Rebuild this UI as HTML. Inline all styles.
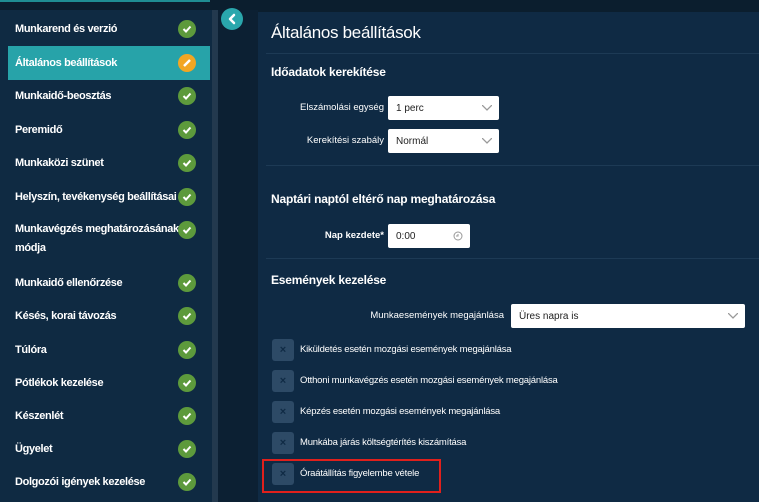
<!DOCTYPE html>
<html><head><meta charset="utf-8"><style>
*{margin:0;padding:0;box-sizing:border-box}
body{width:759px;height:502px;overflow:hidden;background:#0a1f31;font-family:"Liberation Sans",sans-serif;position:relative;color:#fff}
.abs{position:absolute}
#top{left:0;top:0;width:759px;height:12px;background:#0b1e2e}
#teal{left:0;top:0;width:210px;height:2px;background:#1f8d92}
#side{left:0;top:10px;width:212px;height:492px;background:#0f2a42}
#scroll{left:212px;top:10px;width:6px;height:492px;background:#23394e}
#gap{left:218px;top:10px;width:40px;height:492px;background:#0c2033}
#btn{left:221px;top:8px;width:22px;height:22px;border-radius:50%;background:#2aa7ad}
.it{position:absolute;left:8px;width:202px;font-size:11px;letter-spacing:-0.35px;font-weight:bold;padding-left:7px;display:flex;align-items:center;line-height:17px}
.it.act{background:#27a3a9}
.ck{position:absolute;left:170px;width:18px;height:18px;border-radius:50%;background:#5d9a3c}
.ck svg{position:absolute;left:4px;top:4px}
#main{left:258px;top:12px;width:501px;height:490px;background:#0f2a44}
.h1{left:271px;top:23px;font-size:17px;letter-spacing:-0.3px}
.h2{font-size:12px;font-weight:bold;left:271px;letter-spacing:-0.2px}
.ln{left:266px;width:493px;height:1px;background:#1d3a55}
.lab{font-size:9.5px;text-align:right;width:160px}
.sel{background:#fff;border-radius:2px;color:#222;font-size:10px;padding-left:8px;display:flex;align-items:center}
.sel svg{position:absolute;right:7px;top:9px}
.cb{left:272px;width:22px;height:22px;border-radius:3px;background:#2d4a66;color:#0f2a44;font-size:11px;text-align:center;line-height:22px;font-weight:bold}
.cl{left:300px;font-size:9.5px;letter-spacing:-0.2px}
</style></head><body>
<div id="top" class="abs"></div><div id="teal" class="abs"></div>
<div id="side" class="abs"></div><div id="scroll" class="abs"></div><div id="gap" class="abs"></div>
<div id="btn" class="abs"><svg width="22" height="22"><path d="M13 7 L9 11 L13 15" stroke="#fff" stroke-width="2.5" fill="none" stroke-linecap="round" stroke-linejoin="round"/></svg></div>

<div class="it" style="top:20px;height:18px">Munkarend és verzió<div class="ck"><svg width="10" height="10"><path d="M1.5 5 L4 7.5 L8.5 2.5" stroke="#fff" stroke-width="2" fill="none"/></svg></div></div>
<div class="it act" style="top:46px;height:34px">Általános beállítások<div class="ck" style="background:#f2a623;top:8px"><svg width="10" height="10"><path d="M2 8 L8 2" stroke="#fff" stroke-width="2.5"/></svg></div></div>
<div class="it" style="top:87px;height:18px">Munkaidő-beosztás<div class="ck"><svg width="10" height="10"><path d="M1.5 5 L4 7.5 L8.5 2.5" stroke="#fff" stroke-width="2" fill="none"/></svg></div></div>
<div class="it" style="top:121px;height:18px">Peremidő<div class="ck"><svg width="10" height="10"><path d="M1.5 5 L4 7.5 L8.5 2.5" stroke="#fff" stroke-width="2" fill="none"/></svg></div></div>
<div class="it" style="top:154px;height:18px">Munkaközi szünet<div class="ck"><svg width="10" height="10"><path d="M1.5 5 L4 7.5 L8.5 2.5" stroke="#fff" stroke-width="2" fill="none"/></svg></div></div>
<div class="it" style="top:188px;height:18px">Helyszín, tevékenység beállításai<div class="ck"><svg width="10" height="10"><path d="M1.5 5 L4 7.5 L8.5 2.5" stroke="#fff" stroke-width="2" fill="none"/></svg></div></div>
<div class="it" style="top:221px;height:36px;line-height:19px">Munkavégzés meghatározásának<br>módja<div class="ck" style="top:0"><svg width="10" height="10"><path d="M1.5 5 L4 7.5 L8.5 2.5" stroke="#fff" stroke-width="2" fill="none"/></svg></div></div>
<div class="it" style="top:274px;height:18px">Munkaidő ellenőrzése<div class="ck"><svg width="10" height="10"><path d="M1.5 5 L4 7.5 L8.5 2.5" stroke="#fff" stroke-width="2" fill="none"/></svg></div></div>
<div class="it" style="top:307px;height:18px">Késés, korai távozás<div class="ck"><svg width="10" height="10"><path d="M1.5 5 L4 7.5 L8.5 2.5" stroke="#fff" stroke-width="2" fill="none"/></svg></div></div>
<div class="it" style="top:341px;height:18px">Túlóra<div class="ck"><svg width="10" height="10"><path d="M1.5 5 L4 7.5 L8.5 2.5" stroke="#fff" stroke-width="2" fill="none"/></svg></div></div>
<div class="it" style="top:374px;height:18px">Pótlékok kezelése<div class="ck"><svg width="10" height="10"><path d="M1.5 5 L4 7.5 L8.5 2.5" stroke="#fff" stroke-width="2" fill="none"/></svg></div></div>
<div class="it" style="top:407px;height:18px">Készenlét<div class="ck"><svg width="10" height="10"><path d="M1.5 5 L4 7.5 L8.5 2.5" stroke="#fff" stroke-width="2" fill="none"/></svg></div></div>
<div class="it" style="top:440px;height:18px">Ügyelet<div class="ck"><svg width="10" height="10"><path d="M1.5 5 L4 7.5 L8.5 2.5" stroke="#fff" stroke-width="2" fill="none"/></svg></div></div>
<div class="it" style="top:473px;height:18px">Dolgozói igények kezelése<div class="ck"><svg width="10" height="10"><path d="M1.5 5 L4 7.5 L8.5 2.5" stroke="#fff" stroke-width="2" fill="none"/></svg></div></div>

<div id="main" class="abs"></div>
<div class="abs h1">Általános beállítások</div>
<div class="abs ln" style="top:53px"></div>
<div class="abs h2" style="top:65px">Időadatok kerekítése</div>
<div class="abs lab" style="left:224px;top:102px">Elszámolási egység</div>
<div class="abs sel" style="left:388px;top:96px;width:111px;height:24px">1 perc<svg width="10" height="6"><path d="M0 0 L5 5 L10 0" stroke="#999" stroke-width="1.3" fill="none"/></svg></div>
<div class="abs lab" style="left:224px;top:135px">Kerekítési szabály</div>
<div class="abs sel" style="left:388px;top:129px;width:111px;height:24px">Normál<svg width="10" height="6"><path d="M0 0 L5 5 L10 0" stroke="#999" stroke-width="1.3" fill="none"/></svg></div>
<div class="abs ln" style="top:165px"></div>
<div class="abs h2" style="top:192px">Naptári naptól eltérő nap meghatározása</div>
<div class="abs lab" style="left:224px;top:230px;font-weight:bold">Nap kezdete*</div>
<div class="abs sel" style="left:388px;top:224px;width:82px;height:24px">0:00<svg width="10" height="10" style="top:7px"><circle cx="5" cy="5" r="4" stroke="#999" fill="none"/><path d="M5 3 V5 H3" stroke="#999" fill="none"/></svg></div>
<div class="abs ln" style="top:258px"></div>
<div class="abs h2" style="top:273px">Események kezelése</div>
<div class="abs lab" style="left:344px;top:310px">Munkaesemények megajánlása</div>
<div class="abs sel" style="left:511px;top:304px;width:234px;height:24px">Üres napra is<svg width="10" height="6"><path d="M0 0 L5 5 L10 0" stroke="#999" stroke-width="1.3" fill="none"/></svg></div>
<div class="abs cb" style="top:339px">×</div><div class="abs cl" style="top:344px">Kiküldetés esetén mozgási események megajánlása</div>
<div class="abs cb" style="top:370px">×</div><div class="abs cl" style="top:375px">Otthoni munkavégzés esetén mozgási események megajánlása</div>
<div class="abs cb" style="top:401px">×</div><div class="abs cl" style="top:406px">Képzés esetén mozgási események megajánlása</div>
<div class="abs cb" style="top:432px">×</div><div class="abs cl" style="top:437px">Munkába járás költségtérítés kiszámítása</div>
<div class="abs cb" style="top:463px">×</div><div class="abs cl" style="top:468px">Óraátállítás figyelembe vétele</div>
<div class="abs" style="left:262px;top:459px;width:179px;height:34px;border:2px solid #e0201c"></div>
</body></html>
